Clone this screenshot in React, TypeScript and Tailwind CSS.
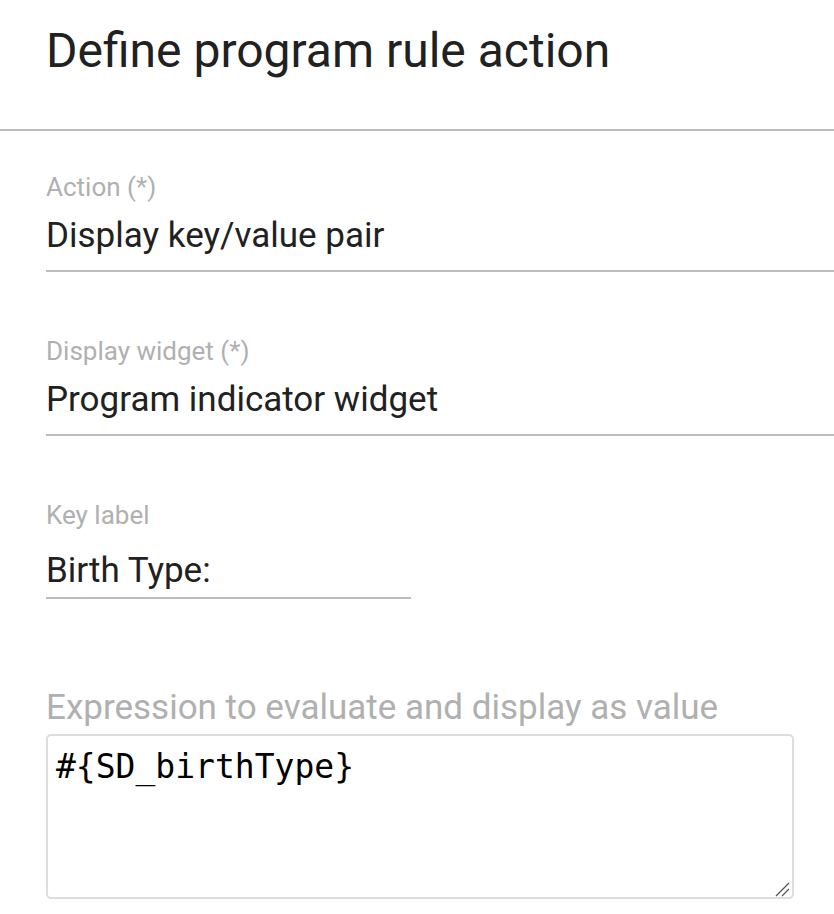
import React from 'react'

const font = { fontFamily: 'Roboto, "Liberation Sans", sans-serif' }

function Field({ label, value, width, valueClass }: { label: string; value: string; width?: string; valueClass?: string }) {
  return (
    <div className={"border-b-2 border-[#bdbdbd] " + (width ?? "w-full") + " " + (valueClass ?? "pb-[12px]")}>
      <div className="text-[26px] leading-[32px] text-[#b0b0b0]">{label}</div>
      <div className={"text-[35px] leading-[44px] text-[#212121] " + (valueClass ? "mt-[18px]" : "mt-[11px]")}>{value}</div>
    </div>
  )
}

export default function App() {
  return (
    <div className="w-[834px] h-[914px] bg-white overflow-hidden" style={font}>
      {/* Header */}
      <div className="h-[131px] border-b-2 border-[#bdbdbd] pl-[46px] pt-[23px]">
        <h1 className="text-[48px] leading-[56px] text-[#212121] font-normal">Define program rule action</h1>
      </div>

      <div className="pl-[46px] pt-[40px]">
        <div className="flex flex-col gap-[63px]">
          <Field label="Action (*)" value="Display key/value pair" />
          <Field label="Display widget (*)" value="Program indicator widget" />
          <Field label="Key label" value="Birth Type:" width="w-[365px]" valueClass="pb-[4px]" />
        </div>

        {/* Expression */}
        <div className="mt-[87px] mr-[40px]">
          <div className="text-[35px] leading-[44px] text-[#b0b0b0]">Expression to evaluate and display as value</div>
          <div className="relative mt-[4px]">
            <textarea
              className="block w-full h-[165px] resize-none rounded-[5px] border-2 border-[#dddddd] pl-[8px] pt-[9px] text-[33px] leading-[44px] text-black outline-none"
              style={{ fontFamily: '"DejaVu Sans Mono", monospace' }}
              defaultValue="#{SD_birthType}"
            />
            {/* resize grip */}
            <svg className="absolute right-[4px] bottom-[2px]" width="16" height="16" viewBox="0 0 16 16">
              <path d="M2 15 L15 2" stroke="#555" strokeWidth="1.3" />
              <path d="M8 15 L15 8" stroke="#555" strokeWidth="1.3" />
            </svg>
          </div>
        </div>
      </div>
    </div>
  )
}
